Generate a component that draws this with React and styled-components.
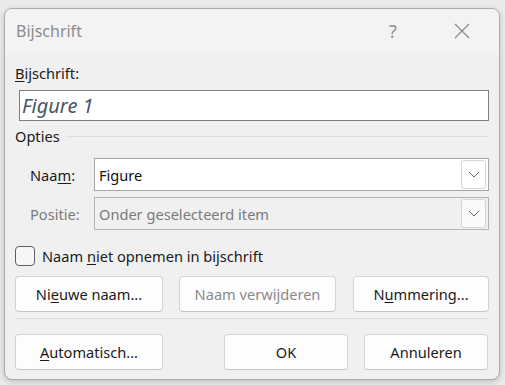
import React from "react";
import styled, { createGlobalStyle } from "styled-components";

const Global = createGlobalStyle`
  html, body { margin: 0; padding: 0; }
  body {
    background: #ebebeb;
    width: 505px;
    height: 385px;
    overflow: hidden;
    font-family: "Noto Sans", "Open Sans", sans-serif;
  }
`;

const Dialog = styled.div`
  box-sizing: border-box;
  margin: 8px 0 0 4px;
  width: 496px;
  height: 372px;
  background: #f0f0f0;
  border: 1px solid #a9a9a9;
  border-radius: 8px;
  box-shadow: 0 2px 6px rgba(0, 0, 0, 0.18);
  overflow: hidden;
  display: flex;
  flex-direction: column;
`;

const TitleBar = styled.div`
  height: 43px;
  flex: none;
  background: #f3f3f3;
  display: flex;
  align-items: center;
  padding: 0 10px 0 11px;
  color: #8b8b8b;
  font-size: 16px;
`;

const Title = styled.div`
  flex: 1;
`;

const TitleButton = styled.div`
  width: ${(p) => p.$w}px;
  margin-right: ${(p) => p.$mr || 0}px;
  height: 100%;
  display: flex;
  align-items: center;
  justify-content: center;
  color: #8f8f8f;
  font-size: 18px;
`;

const Body = styled.div`
  padding: 10px 10px 0 10px;
  display: flex;
  flex-direction: column;
  color: #1a1a1a;
  font-size: 14.6px;
`;

const Key = styled.span`
  text-decoration: underline;
  text-underline-offset: 2px;
  text-decoration-thickness: 1px;
`;

const FieldLabel = styled.div`
  height: 22px;
  line-height: 22px;
  color: #1a1a1a;
`;

const TextInput = styled.div`
  box-sizing: border-box;
  margin: 6px 0 0 4px;
  height: 31px;
  border: 1px solid #7d7d85;
  background: #ffffff;
  font-style: italic;
  font-size: 20px;
  color: #46556c;
  display: flex;
  align-items: center;
  padding-left: 2px;
`;

const GroupHeader = styled.div`
  margin-top: 3px;
  height: 24px;
  display: flex;
  align-items: center;
  gap: 6px;
`;

const GroupRule = styled.div`
  flex: 1;
  height: 1px;
  background: #dcdcdc;
`;

const FieldRow = styled.div`
  display: flex;
  align-items: center;
  margin-top: ${(p) => p.$top}px;
  padding-left: 15px;
`;

const RowLabel = styled.div`
  width: 64px;
  color: ${(p) => (p.$disabled ? "#7b7b7b" : "#1a1a1a")};
`;

const Combo = styled.div`
  box-sizing: border-box;
  flex: 1;
  height: 33px;
  border: 1px solid ${(p) => (p.$disabled ? "#b4b4b4" : "#a6a6a6")};
  background: ${(p) => (p.$disabled ? "#f0f0f0" : "#ffffff")};
  display: flex;
  align-items: center;
  padding: 0 2px 0 4px;
`;

const ComboText = styled.div`
  flex: 1;
  color: ${(p) => (p.$disabled ? "#7a7a7a" : "#111111")};
`;

const DropButton = styled.div`
  box-sizing: border-box;
  width: 25px;
  height: 29px;
  border: 1px solid #d6d6d6;
  border-radius: 3px;
  background: ${(p) => (p.$disabled ? "#fafafa" : "#ffffff")};
  display: flex;
  align-items: center;
  justify-content: center;
`;

const CheckRow = styled.label`
  display: flex;
  align-items: center;
  gap: 7px;
  margin-top: 15px;
  height: 22px;
`;

const CheckBox = styled.span`
  box-sizing: border-box;
  width: 20px;
  height: 20px;
  border: 1px solid #606060;
  border-radius: 4px;
  background: #f6f6f6;
`;

const ButtonRow = styled.div`
  display: flex;
  align-items: center;
  margin-top: ${(p) => p.$top}px;
`;

const Button = styled.div`
  box-sizing: border-box;
  width: ${(p) => p.$w}px;
  margin-left: ${(p) => p.$ml || 0}px;
  height: 36px;
  border: 1px solid #d3d3d3;
  border-bottom-color: #c4c4c4;
  border-radius: 4px;
  background: #fdfdfd;
  display: flex;
  align-items: center;
  justify-content: center;
  color: ${(p) => (p.$disabled ? "#8a8a8a" : "#1a1a1a")};
`;

const Separator = styled.div`
  margin-top: 6px;
  height: 1px;
  background: #dadada;
`;

const Chevron = () => (
  <svg width="12" height="7" viewBox="0 0 12 7">
    <path d="M1 1 L6 6 L11 1" fill="none" stroke="#6a6a6a" strokeWidth="1" />
  </svg>
);

export default function App() {
  return (
    <>
      <Global />
      <Dialog>
        <TitleBar>
          <Title>Bijschrift</Title>
          <TitleButton $w={40} $mr={22}>?</TitleButton>
          <TitleButton $w={54}>
            <svg width="16" height="16" viewBox="0 0 16 16">
              <path d="M1 1 L15 15 M15 1 L1 15" stroke="#8a8a8a" strokeWidth="1.2" />
            </svg>
          </TitleButton>
        </TitleBar>
        <Body>
          <FieldLabel>
            <Key>B</Key>ijschrift:
          </FieldLabel>
          <TextInput>Figure 1</TextInput>
          <GroupHeader>
            Opties
            <GroupRule />
          </GroupHeader>
          <FieldRow $top={10}>
            <RowLabel>
              Naa<Key>m</Key>:
            </RowLabel>
            <Combo>
              <ComboText>Figure</ComboText>
              <DropButton>
                <Chevron />
              </DropButton>
            </Combo>
          </FieldRow>
          <FieldRow $top={6}>
            <RowLabel $disabled>Positie:</RowLabel>
            <Combo $disabled>
              <ComboText $disabled>Onder geselecteerd item</ComboText>
              <DropButton $disabled>
                <Chevron />
              </DropButton>
            </Combo>
          </FieldRow>
          <CheckRow>
            <CheckBox />
            <span>
              Naam <Key>n</Key>iet opnemen in bijschrift
            </span>
          </CheckRow>
          <ButtonRow $top={9}>
            <Button $w={148}>
              Ni<Key>e</Key>uwe naam...
            </Button>
            <Button $w={157} $ml={16} $disabled>
              Naam verwijderen
            </Button>
            <Button $w={136} $ml={17}>
              N<Key>u</Key>mmering...
            </Button>
          </ButtonRow>
          <Separator />
          <ButtonRow $top={15}>
            <Button $w={148}>
              <Key>A</Key>utomatisch...
            </Button>
            <Button $w={124} $ml={61}>
              OK
            </Button>
            <Button $w={124} $ml={16}>
              Annuleren
            </Button>
          </ButtonRow>
        </Body>
      </Dialog>
    </>
  );
}
